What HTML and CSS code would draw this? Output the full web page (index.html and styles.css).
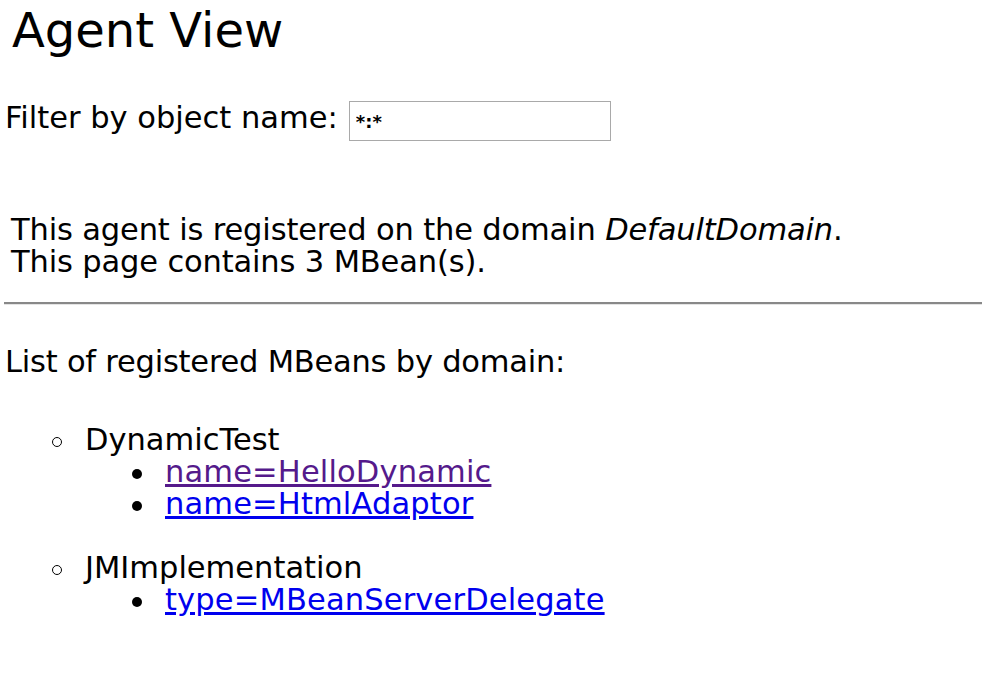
FILE: index.html
```html
<!DOCTYPE html>
<html>
<head>
<meta charset="utf-8">
<title>Agent View</title>
<link rel="stylesheet" href="styles.css">
</head>
<body>
<h1 class="title">Agent View</h1>
<form class="filter">
  <label class="filter-label" for="q">Filter by object name:</label>
  <input class="filter-input" id="q" type="text" value="*:*">
</form>
<p class="info">This agent is registered on the domain <em>DefaultDomain</em>.<br>This page contains 3 MBean(s).</p>
<hr class="rule">
<p class="list-title">List of registered MBeans by domain:</p>
<ul class="domains">
  <li class="domain">DynamicTest
    <ul class="beans">
      <li class="bean"><a class="visited" href="#">name=HelloDynamic</a></li>
      <li class="bean"><a href="#">name=HtmlAdaptor</a></li>
    </ul>
  </li>
  <li class="domain">JMImplementation
    <ul class="beans">
      <li class="bean"><a href="#">type=MBeanServerDelegate</a></li>
    </ul>
  </li>
</ul>
</body>
</html>
```
FILE: styles.css
```css
html, body {
  margin: 0;
  padding: 0;
  background: #fff;
}
body {
  font-family: "DejaVu Sans", sans-serif;
  font-size: 30.5px;
  line-height: 32px;
  color: #000;
}
.title {
  margin: 3px 0 0 12px;
  font-size: 48px;
  line-height: 54px;
  font-weight: normal;
}
.filter {
  display: flex;
  align-items: flex-start;
  margin: 44px 0 0 5px;
}
.filter-label {
  margin-top: 1px;
  margin-right: 11px;
}
.filter-input {
  box-sizing: border-box;
  width: 262px;
  height: 40px;
  margin: 0;
  padding: 0 6px;
  border: 1px solid #a9a9a9;
  font-family: "DejaVu Sans", sans-serif;
  font-size: 18px;
  font-weight: bold;
  color: #000;
  outline: none;
}
.info {
  margin: 73px 0 0 11px;
  letter-spacing: -0.15px;
}
.info em {
  font-style: italic;
}
.rule {
  height: 0;
  margin: 24px 0 0 4px;
  border: 0;
  border-top: 2px solid #888;
  border-bottom: 1px solid #e4e4e4;
}
.list-title {
  margin: 41px 0 0 5px;
  letter-spacing: -0.22px;
}
.domains {
  list-style: none;
  margin: 46px 0 0 0;
  padding: 0 0 0 85px;
}
.domain {
  margin-bottom: 32px;
}
.domain::before,
.bean::before {
  content: "";
  display: inline-block;
  box-sizing: border-box;
  width: 10px;
  height: 10px;
  margin-left: -33px;
  margin-right: 23px;
  border-radius: 50%;
  vertical-align: 3px;
}
.domain::before {
  border: 1.5px solid #000;
}
.beans {
  list-style: none;
  margin: 0;
  padding: 0 0 0 80px;
}
.bean::before {
  background: #000;
}
a {
  color: #0000ee;
  text-decoration: underline;
  letter-spacing: 0.15px;
}
a.visited {
  color: #551a8b;
}
```
